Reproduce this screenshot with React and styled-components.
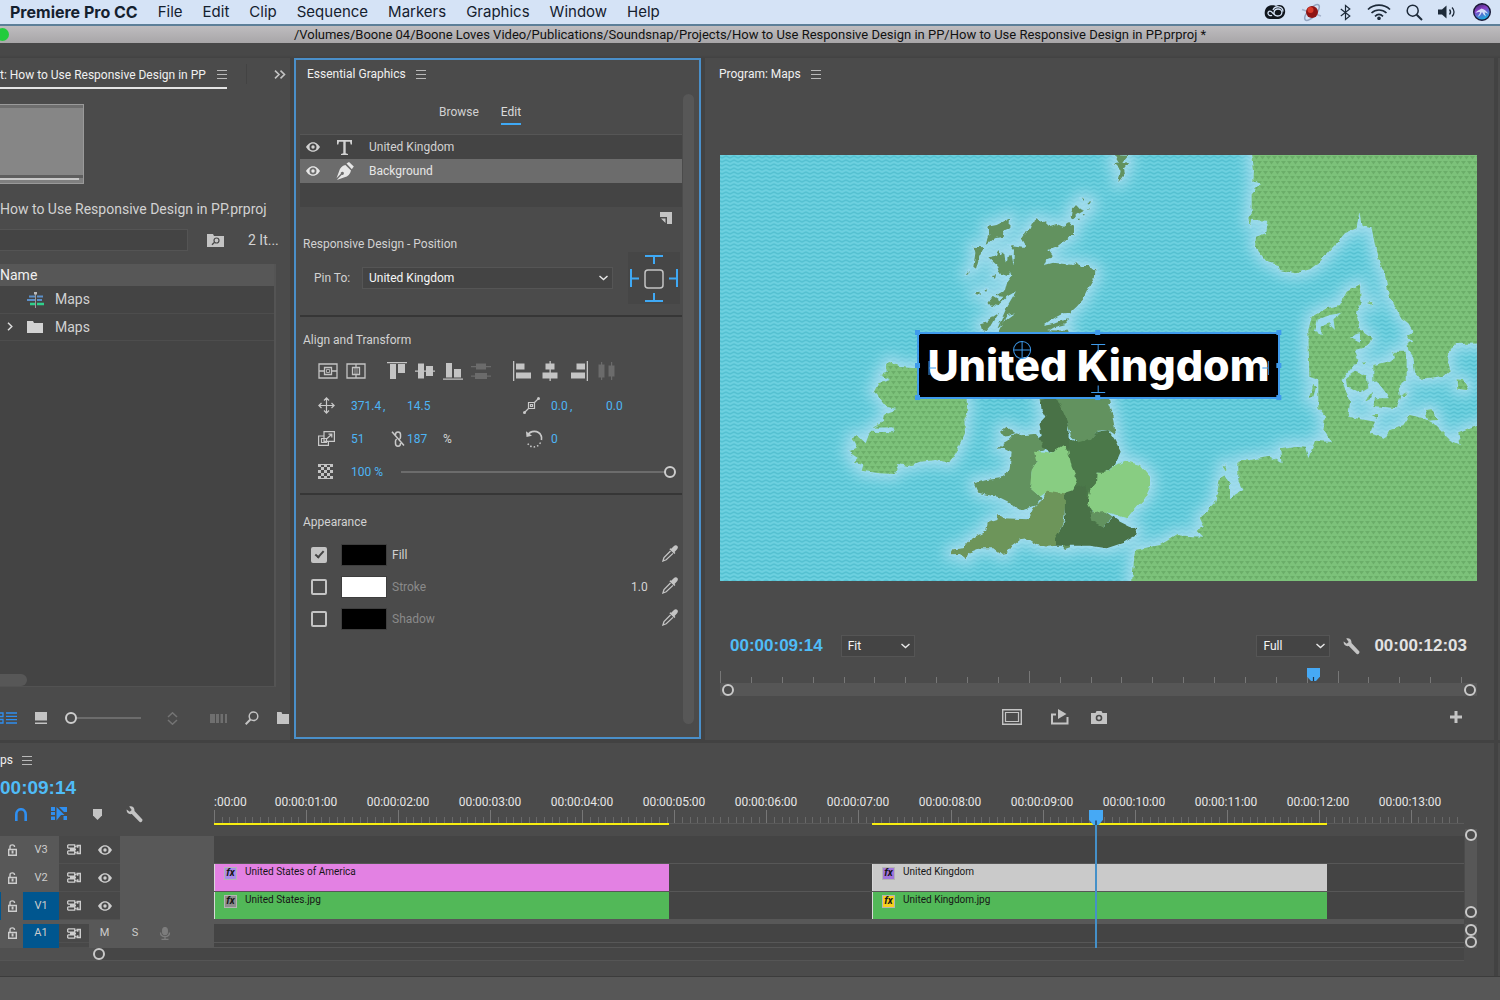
import React from "react";
import styled, { createGlobalStyle, css } from "styled-components";

const ui = '"Roboto", "Open Sans", sans-serif';
const mac = '"Inter", "Roboto", sans-serif';
const code = '"Liberation Sans", "Roboto", sans-serif';

const c = {
  panel: "#4b4b4b",
  gutter: "#424242",
  well: "#444444",
  line: "#585858",
  raised: "#575757",
  text: "#d2d2d2",
  bright: "#f0f0f0",
  dim: "#8a8a8a",
  icon: "#c4c4c4",
  blue: "#4db5f5",
  strong: "#2f8ff0",
};

const GlobalStyle = createGlobalStyle`
  *, *::before, *::after { box-sizing: border-box; }
  body { margin: 0; background: ${c.gutter}; overflow-x: hidden; }
  button, input, select { font: inherit; color: inherit; }
  svg { display: block; flex: none; }
`;

const Shell = styled.div`
  min-height: 100vh;
  display: flex;
  flex-direction: column;
  font: 12px/16px ${ui};
  color: ${c.text};
`;

const reset = css`
  padding: 0;
  border: 0;
  background: none;
`;

const Plain = styled.button`
  ${reset}
  display: inline-flex;
  align-items: center;
  justify-content: center;
  color: ${(p) => p.$tone || c.icon};
  flex: none;
`;

/* ---------- system bar ---------- */
const MenuBar = styled.header`
  height: 26px;
  display: flex;
  align-items: center;
  justify-content: space-between;
  padding: 0 9px 0 10px;
  background: #d5e3f6;
  border-bottom: 2px solid #5c7f99;
  font: 15px/24px ${mac};
  color: #14202e;
`;
const MenuItems = styled.nav`
  display: flex;
  gap: 20px;
`;
const MenuItem = styled.button`
  ${reset}
  font-weight: ${(p) => (p.$strong ? 700 : 400)};
  font-size: ${(p) => (p.$strong ? 16 : 15)}px;
`;
const StatusIcons = styled.div`
  display: flex;
  align-items: center;
  gap: 15px;
`;
const TitleBar = styled.div`
  height: 17px;
  display: flex;
  align-items: center;
  justify-content: center;
  position: relative;
  background: linear-gradient(#bebcbf, #a8a6a8);
  font: 13px/17px ${ui};
  color: #111;
  white-space: nowrap;
`;
const ZoomDot = styled.button`
  ${reset}
  position: absolute;
  left: -4px;
  top: 2px;
  width: 13px;
  height: 13px;
  border-radius: 50%;
  background: #22cc3c;
`;

/* ---------- panels ---------- */
const Upper = styled.main`
  flex: 1;
  display: grid;
  grid-template-columns: 290px 407px minmax(0, 1fr) 2px;
  column-gap: 4px;
  padding-top: 15px;
  background: linear-gradient(#484848 0 12px, ${c.gutter} 15px);
`;
const Panel = styled.section`
  background: ${c.panel};
  display: flex;
  flex-direction: column;
  min-width: 0;
`;
const PanelHead = styled.div`
  height: ${(p) => (p.$h || 32) + "px"};
  flex: none;
  display: flex;
  align-items: center;
  gap: 10px;
  padding-left: ${(p) => (p.$pad || 0) + "px"};
`;
const PanelTitle = styled.h2`
  margin: 0;
  font: 12px/16px ${ui};
  color: ${c.bright};
  white-space: nowrap;
`;

/* project */
const ProjectTab = styled.div`
  display: flex;
  align-items: center;
  justify-content: space-between;
  width: 227px;
  height: 30px;
  padding-top: 3px;
  border-bottom: 2px solid #e4e4e4;
`;
const TabRule = styled.span`
  width: 1px;
  height: 20px;
  margin-left: 9px;
  background: #434343;
`;
const Thumb = styled.div`
  width: 84px;
  height: 80px;
  margin-top: 14px;
  border: 1px solid #9a9a9a;
  border-left: 0;
  background: linear-gradient(#6e6e6e 0 3px, #868686 3px 70px, #5e5e5e 70px 73px, #808080 73px);
  display: flex;
  align-items: flex-end;
  padding: 0 4px 3px 0;
  &::after {
    content: "";
    flex: 1;
    height: 2px;
    background: #c8c8c8;
  }
`;
const ProjectName = styled.p`
  margin: 15px 0 0;
  font-size: 14px;
  line-height: 20px;
  white-space: nowrap;
`;
const SearchRow = styled.div`
  display: flex;
  align-items: center;
  margin-top: 10px;
  font-size: 14px;
  line-height: 20px;
`;
const SearchBox = styled.input`
  width: 188px;
  height: 22px;
  border: 1px solid #545454;
  border-left: 0;
  background: ${c.well};
  margin-right: 19px;
`;
const ItemCount = styled.span`
  margin-left: 24px;
`;
const Bin = styled.div`
  flex: 1;
  width: 276px;
  margin-top: 13px;
  background: ${c.well};
  border-right: 2px solid #545454;
  border-bottom: 1px solid #525252;
  display: flex;
  flex-direction: column;
  justify-content: space-between;
`;
const BinTable = styled.table`
  width: 100%;
  border-collapse: collapse;
  font-size: 14px;
  line-height: 20px;
  th {
    height: 22px;
    padding: 0;
    text-align: left;
    font-weight: 400;
    background: ${c.raised};
    color: ${c.bright};
  }
  td {
    height: 27px;
    padding: 0;
    border-bottom: 1px solid #4d4d4d;
  }
`;
const BinCell = styled.div`
  display: grid;
  grid-template-columns: 20px 17px 1fr;
  column-gap: 7px;
  align-items: center;
  svg:first-child { justify-self: center; }
  span { grid-column: 3; padding-left: 4px; }
`;
const BinScroll = styled.div`
  width: 27px;
  height: 12px;
  border-radius: 0 6px 6px 0;
  background: #575757;
`;
const ProjectFoot = styled.div`
  height: 53px;
  display: flex;
  align-items: center;
  padding-top: 9px;
`;
const Gap = styled.span`
  width: ${(p) => p.$w + "px"};
  flex: none;
`;

/* sliders */
const Range = styled.input`
  appearance: none;
  margin: 0;
  height: 12px;
  width: ${(p) => p.$w || "auto"};
  flex: ${(p) => (p.$grow ? 1 : "none")};
  min-width: 0;
  background: linear-gradient(#6c6c6c, #6c6c6c) center / calc(100% - 12px) 2px no-repeat;
  &::-webkit-slider-thumb {
    appearance: none;
    width: 12px;
    height: 12px;
    border-radius: 50%;
    border: 2px solid #cdcdcd;
    background: ${c.panel};
  }
`;

/* essential graphics */
const GraphicsPanel = styled(Panel)`
  border: 2px solid #4a8fc9;
  margin-bottom: 1px;
`;
const GraphicsBody = styled.div`
  flex: 1;
  display: flex;
  gap: 1px;
  padding: 0 5px 13px 4px;
`;
const GraphicsMain = styled.div`
  flex: 1;
  min-width: 0;
`;
const GraphicsScroll = styled.div`
  width: 11px;
  margin-top: 6px;
  border-radius: 6px;
  background: #575757;
`;
const Tabs = styled.div`
  display: flex;
  gap: 22px;
  padding: 12px 0 9px 139px;
`;
const Tab = styled.button`
  ${reset}
  height: 25px;
  border-bottom: 2px solid ${(p) => (p.$on ? "#3fa9f5" : "transparent")};
  color: ${(p) => (p.$on ? "#dcdcdc" : c.text)};
`;
const Layers = styled.ul`
  margin: 0;
  padding: 0 0 24px;
  list-style: none;
  background: ${c.well};
  border-top: 1px solid #565656;
`;
const Layer = styled.li`
  height: 24px;
  display: grid;
  grid-template-columns: 14px 19px 1fr;
  column-gap: 15px;
  align-items: center;
  padding-left: 6px;
  background: ${(p) => (p.$on ? "#6c6c6c" : "transparent")};
  color: ${(p) => (p.$on ? "#e6e6e6" : c.text)};
  svg { justify-self: center; }
`;
const NewLayerRow = styled.div`
  height: 22px;
  display: flex;
  justify-content: flex-end;
  align-items: center;
  padding-right: 10px;
`;
const SectionTitle = styled.h3`
  margin: ${(p) => p.$top + "px"} 0 0 3px;
  font: 12px/16px ${ui};
`;
const PinRow = styled.div`
  display: flex;
  align-items: center;
  padding: 0 2px 0 14px;
  height: 52px;
`;
const PinLabel = styled.label`
  width: 48px;
`;
const SelectWrap = styled.div`
  position: relative;
  flex: ${(p) => (p.$w ? "none" : 1)};
  width: ${(p) => (p.$w ? p.$w + "px" : "auto")};
  svg {
    position: absolute;
    right: 5px;
    top: 8px;
    pointer-events: none;
  }
`;
const Select = styled.select`
  appearance: none;
  display: block;
  width: 100%;
  height: 22px;
  padding: 0 20px 0 6px;
  border: 1px solid #555;
  background: ${c.well};
  color: #f6f6f6;
  font-size: 12px;
  line-height: 16px;
`;
const PinPad = styled.div`
  width: 52px;
  height: 52px;
  margin-left: 15px;
  background: #464646;
`;
const Divider = styled.hr`
  margin: ${(p) => p.$top + "px"} 0 0;
  border: 0;
  height: 2px;
  background: #363636;
`;
const AlignRow = styled.div`
  display: flex;
  gap: 21px;
  height: 20px;
  margin: 13px 0 8px;
  padding-left: 18px;
`;
const AlignGroup = styled.div`
  display: flex;
  gap: 8px;
`;
const TransformRow = styled.div`
  height: 33px;
  display: grid;
  grid-template-columns: 33px 56px 116px 28px 55px 1fr;
  align-items: center;
  padding-left: 18px;
`;
const Cell = styled.div`
  display: flex;
  align-items: center;
  color: ${(p) => p.$tone || c.blue};
  grid-column: ${(p) => p.$col || "auto"};
`;
const HotValue = styled.input`
  ${reset}
  width: ${(p) => p.$w + "px"};
  color: ${(p) => p.$tone || c.blue};
`;
const Unit = styled.span`
  color: ${(p) => p.$tone || "inherit"};
`;
const AppearanceList = styled.div`
  margin-top: 9px;
`;
const AppearanceRow = styled.div`
  height: 32px;
  display: flex;
  align-items: center;
  padding: 0 4px 0 11px;
`;
const Check = styled.input`
  appearance: none;
  margin: 0 14px 0 0;
  width: 16px;
  height: 16px;
  border: 2px solid #c4c4c4;
  border-radius: 2px;
  display: grid;
  place-items: center;
  &:checked { background: #c4c4c4; }
  &:checked::after {
    content: "";
    width: 5px;
    height: 9px;
    margin-bottom: 3px;
    border: solid #444;
    border-width: 0 2px 2px 0;
    transform: rotate(42deg);
  }
`;
const Swatch = styled.button`
  width: 46px;
  height: 22px;
  padding: 0;
  border: 1px solid #3e3e3e;
  background: ${(p) => p.$color};
`;
const AppearanceLabel = styled.label`
  flex: 1;
  padding-left: 5px;
  color: ${(p) => (p.$on ? c.text : c.dim)};
`;
const PickButton = styled(Plain)`
  padding-bottom: 4px;
`;

/* program monitor */
const Stage = styled.div`
  flex: 1;
  padding: 65px 17px 0 15px;
`;
const Frame = styled.div`
  position: relative;
  > svg { width: 100%; height: auto; }
`;
const TitleGraphic = styled.div`
  position: absolute;
  left: 26%;
  top: 41.5%;
  width: 48%;
  aspect-ratio: 363 / 67;
  display: grid;
  place-items: center;
  background: #000;
  border: 2px solid #3f9bec;
  color: #fff;
  font: 800 43px/60px ${mac};
  white-space: nowrap;
  svg {
    position: absolute;
    inset: -2px;
    width: calc(100% + 4px);
    height: calc(100% + 4px);
    overflow: visible;
  }
`;
const MonitorBar = styled.div`
  height: 24px;
  display: flex;
  align-items: center;
  padding: 0 27px 0 25px;
`;
const Timecode = styled.span`
  display: block;
  font: 700 ${(p) => p.$size || 17}px/22px ${code};
  color: ${(p) => p.$tone || "#4fbcf7"};
`;
const Grow = styled.span`
  flex: 1;
`;
const Scrub = styled.div`
  position: relative;
  margin: 9px 17px 0 15px;
`;
const ScrubTicks = styled.div`
  height: 16px;
  display: flex;
  align-items: flex-end;
  padding-right: 15px;
`;
const ScrubTick = styled.span`
  flex: ${(p) => (p.$last ? "none" : 1)};
  height: ${(p) => (p.$major ? 12 : 6)}px;
  border-left: 1px solid #777;
`;
const ScrubBar = styled.div`
  height: 13px;
  display: flex;
  align-items: center;
  justify-content: space-between;
  padding: 0 1px 0 2px;
  background: #565656;
`;
const Knob = styled.button`
  width: 12px;
  height: 12px;
  padding: 0;
  border: 2px solid #c9c9c9;
  border-radius: 50%;
  background: #4b4b4b;
  flex: none;
`;
const ScrubMarker = styled.div`
  position: absolute;
  left: 77.5%;
  top: 1px;
`;
const Transport = styled.div`
  height: 24px;
  margin: 9px 32px 11px 297px;
  display: flex;
  align-items: center;
`;

/* timeline */
const Timeline = styled.section`
  display: grid;
  grid-template-columns: minmax(0, 1fr) 2px;
  column-gap: 4px;
  margin-top: 3px;
`;
const TimelineBody = styled.div`
  background: ${c.panel};
  padding-bottom: 15px;
`;
const TimelineTop = styled.div`
  display: grid;
  grid-template-columns: 214px minmax(0, 1fr) 30px;
`;
const Tools = styled.div`
  grid-row: 1;
`;
const SequenceName = styled.div`
  display: flex;
  align-items: center;
  gap: 9px;
  height: 34px;
  color: ${c.bright};
`;
const ToolRow = styled.div`
  display: flex;
  align-items: center;
  height: 22px;
  margin-top: 4px;
  padding-left: 14px;
`;
const Ruler = styled.div`
  padding-top: 51px;
`;
const RulerLabels = styled.div`
  display: grid;
  grid-template-columns: 46fr repeat(13, 92fr) 8fr;
  font: 12px/16px ${ui};
  color: #e6e6e6;
  text-align: center;
  white-space: nowrap;
  span:first-child { text-align: left; }
`;
const RulerTicks = styled.div`
  height: 13px;
  display: flex;
  align-items: flex-end;
`;
const RulerTick = styled.span`
  flex: 1;
  height: ${(p) => (p.$major ? 13 : 6)}px;
  border-left: 1px solid ${(p) => (p.$major ? "#777" : "#686868")};
`;
const ClipGrid = styled.div`
  display: grid;
  grid-template-columns: 455fr 203fr 455fr 137fr;
`;
const RenderBar = styled(ClipGrid)`
  height: 13px;
  align-items: start;
  background: linear-gradient(#5a5a5a 0 1px, transparent 1px);
  i { height: 3px; background: #f8ee10; border-bottom: 1px solid #4b4b3c; }
  i:nth-child(2) { grid-column: 3; }
`;
const Tracks = styled.div`
  display: grid;
  grid-template-columns: 214px minmax(0, 1fr) 30px;
`;
const TrackHeads = styled.div`
  background: #585858;
`;
const TrackHead = styled.div`
  height: ${(p) => p.$h || 28}px;
  display: grid;
  grid-template-columns: 22px 36px 30px 31px 30px 30px;
  align-items: stretch;
  overflow: hidden;
  border-left: ${(p) => (p.$source ? "1px solid #00568f" : "1px solid #585858")};
`;
const HeadCell = styled.button`
  ${reset}
  display: grid;
  place-items: center;
  color: #cdcdcd;
  font-size: 11px;
  background: ${(p) => (p.$fill === "target" ? "#00568f" : p.$fill === "dark" ? "#484848" : "transparent")};
  border-bottom: 1px solid ${(p) => (p.$fill === "dark" ? "#505050" : "transparent")};
`;
const HeadBand = styled.div`
  height: 4px;
`;
const Lanes = styled.div`
  position: relative;
  background: ${c.well};
`;
const Lane = styled(ClipGrid)`
  height: ${(p) => p.$h || 28}px;
  border-bottom: 1px solid #575757;
`;
const Band = styled.div`
  height: 4px;
  background: #585858;
`;
const Clip = styled.div`
  grid-column: ${(p) => p.$col};
  display: flex;
  align-items: flex-start;
  gap: 8px;
  padding: 1px 0 0 9px;
  background: ${(p) => p.$color};
  border-left: 1px solid #d8d8d8;
  color: #161616;
  font: 10px/14px ${ui};
`;
const Fx = styled.span`
  width: 13px;
  height: 13px;
  margin-top: 2px;
  border: 1px solid #b4b4b4;
  background: ${(p) => p.$color};
  font: italic 700 10px/10px ${ui};
  text-align: center;
`;
const Playhead = styled.div`
  position: absolute;
  left: 70%;
  top: -26px;
  bottom: 0;
  display: flex;
  flex-direction: column;
  align-items: center;
  &::after {
    content: "";
    flex: 1;
    width: 2px;
    background: #4590c8;
  }
`;
const HeightBars = styled.div`
  display: flex;
  flex-direction: column;
  justify-content: space-between;
  margin-top: -7px;
  padding-left: 1px;
`;
const HeightBar = styled.div`
  width: 12px;
  height: ${(p) => p.$h}px;
  display: flex;
  flex-direction: column;
  justify-content: space-between;
  background: #575757;
`;
const ZoomBar = styled.div`
  height: 13px;
  display: flex;
  align-items: center;
  margin-right: 30px;
  padding-left: 93px;
  background: linear-gradient(90deg, #505050 100px, #464646 100px);
  border-bottom: 1px solid #555;
`;
const StatusBar = styled.footer`
  height: 24px;
  background: #575757;
  border-top: 1px solid #3c3c3c;
`;

/* ---------- icons ---------- */
const Burger = () => (
  <svg width="10" height="9" viewBox="0 0 10 9" stroke="#b9b9b9" strokeWidth="1">
    <path d="M0 .5h10M0 4.500h10M0 8.500h10" />
  </svg>
);
const Chevron = () => (
  <svg width="9" height="6" viewBox="0 0 9 6" fill="none" stroke="#e8e8e8" strokeWidth="1.400">
    <path d="M.5 1 4.500 4.600 8.500 1" />
  </svg>
);
const Eye = () => (
  <svg width="14" height="10" viewBox="0 0 14 10">
    <path fill="currentColor" fillRule="evenodd" d="M7 .2C10.500.2 12.800 3 14 5 12.800 7 10.500 9.800 7 9.800S1.200 7 0 5C1.200 3 3.500.2 7 .2ZM7 1.600a3.500 3.500 0 1 0 0 7 3.500 3.500 0 0 0 0-7Z" />
    <circle cx="7" cy="5" r="1.700" fill="currentColor" />
  </svg>
);
const TypeIcon = () => (
  <svg width="17" height="17" viewBox="0 0 17 17" fill="currentColor">
    <path d="M1 1h15v4.500h-1.300L14 2.700H9.700v11.600l2.300.6V16H5v-1.100l2.300-.6V2.700H3l-.7 2.800H1Z" />
  </svg>
);
const Pen = () => (
  <svg width="18" height="18" viewBox="0 0 18 18" fill="currentColor">
    <path d="M10.500 1.500 13 0l4.800 4.600-2 2.700Z" />
    <path d="m9.400 3 5.600 5.400c-.8 3.600-3 6-6.500 6.900L1.500 17.700l-.3-.3 4.600-4.600a1.600 1.600 0 1 0-1-1L.5 16.300 3 9.400C4 6 6 3.700 9.400 3Z" />
  </svg>
);
const Wrench = () => (
  <svg width="17" height="17" viewBox="0 0 17 17" fill="currentColor">
    <path d="M3.200.6C6-.4 8.800 1.500 8.500 5l7.700 8.300c.9 1-.6 3.700-2.500 2.600L5.800 8C2.500 8.700.2 6.400.7 3.500l3 2.300 2-1.800Z" />
  </svg>
);
const Dropper = () => (
  <svg width="16" height="17" viewBox="0 0 16 17">
    <path fill="currentColor" d="M9.200 3.700 12 1c1-1 2.700-.9 3.400 0 .8.9.6 2.300-.3 3.200l-2.500 2.700.8 1-1 1-5-4.700 1-1Z" />
    <path fill="none" stroke="currentColor" strokeWidth="1.300" d="M8.500 6 2 12.600.9 16l3.300-1.200L11 8.400" />
  </svg>
);
const Folder = ({ w = 16 }) => (
  <svg width={w} height="12" viewBox="0 0 16 12" preserveAspectRatio="none" fill="currentColor">
    <path d="M0 0h6l1 2h9v10H0Z" />
  </svg>
);
const FindFolder = () => (
  <svg width="17" height="13" viewBox="0 0 17 13">
    <path fill="#c4c4c4" d="M0 0h6l1 2h10v11H0Z" />
    <circle cx="9.500" cy="6.500" r="2.500" fill="none" stroke="#484848" strokeWidth="1.200" />
    <path d="m7.600 8.300-2.600 2.500" stroke="#484848" strokeWidth="1.400" />
  </svg>
);
const SequenceIcon = () => (
  <svg width="17" height="17" viewBox="0 0 17 17">
    <path d="M2 5.500h6M10 5.500h6M0 9h8M10 9h5" stroke="#5c8fc8" strokeWidth="2" />
    <path d="M3 13h5M10 13h7" stroke="#2fd08c" strokeWidth="2.500" />
    <path d="M8.500 1v16" stroke="#9a9a9a" strokeWidth="1" />
    <path d="M7 1h3v2.500H7Z" fill="#bbb" />
  </svg>
);
const Loupe = () => (
  <svg width="14" height="14" viewBox="0 0 14 14" fill="none" stroke="currentColor">
    <circle cx="8.500" cy="5.300" r="4.300" strokeWidth="1.500" />
    <path d="m5.400 8.500-4.700 4.800" strokeWidth="2" />
  </svg>
);
const Marker = ({ w = 13, h = 13 }) => (
  <svg width={w} height={h} viewBox="0 0 13 13" preserveAspectRatio="none">
    <path fill="#46a9f5" d="M0 0h13v8.500L9 13H4L0 8.500Z" />
    <path d="M6.500 9v4" stroke="#1e3347" strokeWidth="1.200" />
  </svg>
);
const Lock = () => (
  <svg width="9" height="12" viewBox="0 0 9 12">
    <path fill="none" stroke="#cdcdcd" strokeWidth="1.400" d="M2 5V2.700C2 .2 6.500.2 6.500 2.700V3" />
    <path fill="#cdcdcd" fillRule="evenodd" d="M0 4.800h9V12H0ZM1.400 6.200v4.400h6.200V6.200Z" />
    <path fill="#cdcdcd" d="M3.600 6.500h1.900v3H3.600Z" />
  </svg>
);
const SyncLock = () => (
  <svg width="14" height="11" viewBox="0 0 14 11" fill="none" stroke="#cdcdcd" strokeWidth="1.300">
    <path d="M1.300.800h6.400v3.400H1.300L.7 3.500v-2ZM1.300 6.800h6.400v3.400H1.300L.7 9.500v-2ZM7.700 2.500h2M7.700 8.500h2M3 5.500h6" />
    <path d="M9.500 1.500h3.800v8H9.500M10.700 1v2.800M10.700 7.200V10" strokeWidth="1.500" />
  </svg>
);
const Mic = () => (
  <svg width="12" height="13" viewBox="0 0 12 13" fill="none" stroke="#7d7d7d" strokeWidth="1.300">
    <rect x="3.700" y=".6" width="4.600" height="7" rx="2.300" fill="#7d7d7d" />
    <path d="M1.500 5.500c0 5.500 9 5.500 9 0M6 9.800V12M2.500 12.300h7" />
  </svg>
);

const alignIcons = [
  [
    ["Center vertically", <g key="a" fill="none" stroke="currentColor" strokeWidth="1.300"><path d="M1 3h18v14H1ZM6.500 6.500h7v7h-7ZM1 10h5.500M13.500 10H19" /><path d="M8.500 8.500h3v3h-3Z" strokeWidth=".8" /></g>],
    ["Center horizontally", <g key="b" fill="none" stroke="currentColor" strokeWidth="1.300"><path d="M1 3h18v14H1ZM6.500 6.500h7v7h-7ZM10 3v3.500M10 13.500V17" /><path d="M9 6.500h2v7H9Z" strokeWidth=".7" /></g>],
  ],
  [
    ["Align top", <g key="c" fill="currentColor"><path d="M0 1h20v1.300H0ZM3 3h6v15H3ZM11 3h7v9h-7Z" /></g>],
    ["Align middle", <g key="d" fill="currentColor"><path d="M0 9.500h20v1.300H0ZM3 2.500h6v15H3ZM11 5h7v10h-7Z" /></g>],
    ["Align bottom", <g key="e" fill="currentColor"><path d="M0 17.500h20v1.300H0ZM3 2h6v14.500H3ZM11 8h7v8.500h-7Z" /></g>],
    ["Distribute vertically", <g key="f" fill="#6b6b6b"><path d="M0 5h20v1.200H0ZM5 2.500h10v6H5ZM0 14.500h20v1.200H0ZM4 12h12v6H4Z" /></g>],
  ],
  [
    ["Align left", <g key="g" fill="currentColor"><path d="M1 0h1.300v20H1ZM4 2.500h8.500v6H4ZM4 11.500h15v6H4Z" /></g>],
    ["Align center", <g key="h" fill="currentColor"><path d="M9.500 0h1.300v20H9.500ZM5.500 2.500h9v6h-9ZM2.500 11.500h15v6h-15Z" /></g>],
    ["Align right", <g key="i" fill="currentColor"><path d="M18.700 0H20v20h-1.300ZM8.500 2.500H17v6H8.500ZM3 11.500h14v6H3Z" /></g>],
    ["Distribute horizontally", <g key="j" fill="#6b6b6b"><path d="M5 1h1.200v18H5ZM2.500 3.500h6v13h-6ZM15 1h1.200v18H15ZM12.500 4.500h6v11h-6Z" /></g>],
  ],
];

/* ---------- the map artwork ---------- */
const scotland =
  "M950 208 962 218 975 214 990 228 1010 222 1030 230 1045 220 1062 228 1062 255 1045 262 1030 275 1010 290 985 300 998 318 980 325 972 346 1000 338 1060 345 1072 340 1080 348 1110 348 1126 362 1125 382 1112 402 1100 425 1088 450 1070 470 1050 488 1030 490 1010 500 990 512 968 528 1000 522 1025 512 1048 508 1035 523 1000 532 985 541 1045 542 1060 600 1160 700 1170 760 960 760 950 640 870 600 835 545 850 515 885 490 862 495 842 528 832 536 846 505 862 468 888 424 860 440 830 470 850 440 825 438 855 420 860 400 877 378 865 360 850 350 866 320 880 345 882 300 870 285 905 290 920 290 905 265 918 245 930 235 935 218Z";
const isles =
  "M870 205 868 235 850 242 848 260 825 265 800 285 808 255 802 230 830 225ZM760 290 792 292 778 320 768 356 760 350 766 310ZM835 300 845 322 852 305 858 345 870 372 862 378 838 370 830 345 805 322 826 318ZM740 372 748 362 748 370ZM765 430 780 428 775 438ZM790 422 802 418 798 427ZM803 462 818 440 842 455 835 468ZM780 520 806 513 810 528 798 542 785 540ZM800 512 838 488 830 500 812 532ZM815 378 828 376 826 388ZM862 322 872 318 876 340 864 345ZM1055 180 1068 165 1080 178 1092 182 1072 194 1060 208 1052 200ZM1083 147 1090 146 1090 154ZM1102 156 1114 154 1108 163ZM1104 174 1110 176 1106 180ZM1072 206 1080 206 1076 214ZM1088 192 1094 192 1092 197ZM1185 15 1225 17 1210 35 1225 38 1212 55 1215 70 1195 97 1202 62 1182 42 1200 40ZM840 845 860 830 885 848 870 858 850 860ZM1022 1184 1050 1182 1050 1195 1035 1200Z";
const regions = [
  ["#4b7849", "M1030 860 1075 876 1110 866 1130 845 1165 840 1185 870 1202 905 1185 945 1155 970 1130 968 1135 1010 1110 1100 1030 1060Z"],
  ["#487247", "M962 750 1000 742 1040 760 1048 895 1020 895 990 908 970 895 955 868 965 860 958 820 976 800 965 780Z"],
  ["#62925e", "M1010 742 1160 750 1177 795 1188 856 1165 840 1132 842 1110 870 1075 880 1052 855 1040 810Z"],
  ["#487247", "M1030 1030 1060 1015 1100 1005 1105 1070 1120 1110 1150 1130 1180 1100 1200 1115 1230 1130 1253 1138 1245 1158 1210 1178 1160 1195 1110 1187 1008 1187 1000 1160 1020 1140 1035 1110Z"],
  ["#62925e", "M1110 1085 1150 1080 1178 1100 1150 1130 1118 1115Z"],
  ["#88cd82", "M1130 968 1155 968 1190 945 1215 932 1260 945 1290 980 1290 1012 1275 1045 1250 1070 1220 1105 1180 1092 1155 1085 1120 1090 1103 1060 1110 1020 1128 1000Z"],
  ["#62925e", "M862 875 885 850 905 856 945 852 965 880 975 900 955 905 950 935 935 965 932 1015 965 1045 950 1065 910 1080 890 1078 865 1055 835 1040 800 1034 775 1028 762 1000 800 990 840 985 868 962 875 905 852 893 832 897 850 882Z"],
  ["#6d955a", "M980 1020 1034 1020 1035 1065 1032 1110 1020 1140 1005 1165 1010 1187 985 1190 950 1185 920 1165 900 1168 870 1190 860 1212 845 1215 820 1195 780 1195 745 1208 740 1228 720 1212 692 1213 700 1198 730 1195 755 1165 795 1145 800 1120 832 1110 835 1095 850 1105 925 1108 940 1075 968 1048Z"],
  ["#88cd82", "M942 905 990 910 1030 885 1045 905 1055 950 1073 990 1060 1020 1030 1030 985 1022 960 1040 930 1015 935 960 950 935Z"],
];
const ireland =
  "M515 635 535 650 585 655 640 640 700 680 740 745 742 790 733 805 735 850 710 905 688 940 650 930 600 935 565 948 535 942 525 972 480 970 425 962 430 945 402 938 415 925 385 905 410 893 405 876 395 865 415 858 437 880 450 845 525 847 520 832 458 833 490 815 495 790 530 777 500 770 480 745 462 725 475 700 510 690 480 675 500 668 498 645Z";
const norway =
  "M1595 0H2290V580L2205 582 2180 620 2190 660 2170 678 2100 687 2085 670 2080 620 2065 600 2062 578 2078 575 2060 560 2080 545 2065 520 2045 505 2028 475 2005 430 1995 372 1980 342 1968 300 1955 235 1925 228 1918 185 1910 235 1875 250 1840 290 1800 335 1770 358 1725 370 1680 360 1675 345 1640 335 1605 290 1608 260 1638 250 1645 212 1597 210 1592 226 1585 205 1595 195 1595 130 1625 100 1600 95 1602 60Z";
const continent =
  "M1235 1310 1245 1200 1320 1185 1370 1155 1400 1158 1450 1160 1430 1140 1452 1130 1440 1105 1485 1060 1500 985 1515 975 1530 1000 1530 1045 1570 1020 1555 990 1555 935 1650 920 1685 940 1680 895 1730 888 1755 890 1765 925 1785 872 1835 876 1810 840 1815 800 1795 775 1795 690 1768 680 1765 540 1775 500 1820 475 1860 465 1880 425 1920 403 1922 460 1908 490 1920 540 1955 565 1940 590 1905 600 1915 630 1865 690 1890 755 1885 800 1965 815 1950 850 1995 865 2010 840 2050 825 2070 795 2110 805 2140 820 2190 870 2222 885 2215 850 2290 820V1310Z";
const danishIsles =
  "M1880 682 1905 665 1940 677 1945 715 1920 730 1885 710ZM1960 645 2000 635 2025 625 2020 605 2060 605 2060 690 2035 710 2040 740 2030 775 1960 768 1965 745 2010 745 1980 705 1960 690ZM2210 688 2225 690 2245 705 2238 720 2212 716ZM2115 780 2135 778 2152 810 2125 812ZM1766 745 1780 705 1788 712 1780 740ZM1945 458 1957 456 1955 466ZM1508 950 1520 942 1518 965ZM1935 755 1955 725 1955 745ZM1955 795 1975 795 1970 803ZM1925 635 1935 634 1932 644ZM2040 738 2060 728 2055 738Z";
const fjords =
  "M1782 545 1790 510 1830 495 1866 488 1840 505 1845 540 1825 520 1805 530 1805 555ZM1890 560 1920 550 1920 575Z";

const MapArt = () => (
  <svg viewBox="0 0 757 426" role="img" aria-label="Map of the United Kingdom">
    <defs>
      <pattern id="waves" width="8" height="4" patternUnits="userSpaceOnUse">
        <rect width="8" height="4" fill="#62ccdc" />
        <path d="M-2 1 2 3 6 1 10 3" fill="none" stroke="#52bdce" strokeWidth="1" />
      </pattern>
      <pattern id="wavesLight" width="8" height="4" patternUnits="userSpaceOnUse">
        <path d="M-2 -1 2 1 6 -1 10 1M-2 3 2 5 6 3 10 5" fill="none" stroke="#a6e4ee" strokeWidth="1" opacity=".22" />
      </pattern>
      <pattern id="dots" width="6" height="10" patternUnits="userSpaceOnUse">
        <rect width="6" height="10" fill="#7cc27a" />
        <path d="M0 1h5L2.500 4.500ZM3 6h5L5.500 9.500ZM-3 6h5L-.5 9.500Z" fill="#6bae69" />
      </pattern>
      <filter id="rough" x="-5%" y="-5%" width="110%" height="110%">
        <feTurbulence type="fractalNoise" baseFrequency=".2" numOctaves="1" seed="4" />
        <feDisplacementMap in="SourceGraphic" scale="5" xChannelSelector="R" yChannelSelector="G" />
      </filter>
      <filter id="glow" x="-10%" y="-10%" width="120%" height="120%">
        <feGaussianBlur stdDeviation="6" />
      </filter>
      <g id="land" transform="translate(0 -5) scale(.33333)">
        <path d={scotland} />
        <path d={isles} />
        {regions.map(([, d]) => <path key={d} d={d} />)}
        <path d={ireland} />
        <path d={norway} />
        <path d={continent} />
        <path d={danishIsles} />
      </g>
      <mask id="textured">
        <g filter="url(#rough)">
          <g transform="translate(0 -5) scale(.33333)">
            <path fill="#fff" d={ireland + norway + continent + danishIsles} />
            <path fill="#000" d={fjords} />
          </g>
        </g>
      </mask>
      <clipPath id="frame"><rect width="757" height="426" /></clipPath>
    </defs>
    <g clipPath="url(#frame)">
      <rect width="757" height="426" fill="url(#waves)" />
      <use href="#land" fill="#b4e0f2" stroke="#b4e0f2" strokeWidth="72" strokeLinejoin="round" opacity=".2" filter="url(#glow)" />
      <use href="#land" fill="#b4e0f2" stroke="#b4e0f2" strokeWidth="24" strokeLinejoin="round" opacity=".75" filter="url(#glow)" />
      <rect width="757" height="426" fill="url(#wavesLight)" />
      <use href="#land" fill="#9bdaee" stroke="#9bdaee" strokeWidth="6" filter="url(#rough)" />
      <rect width="757" height="426" fill="url(#dots)" mask="url(#textured)" />
      <g filter="url(#rough)">
        <g transform="translate(0 -5) scale(.33333)">
          <path fill="#62925e" d={scotland + isles} />
          {regions.map(([fill, d]) => <path key={d} fill={fill} d={d} />)}
        </g>
      </g>
    </g>
  </svg>
);

const TitleHandles = () => (
  <svg viewBox="0 0 363 67" preserveAspectRatio="none" fill="none" stroke="#3f9bec">
    <g fill="#3f9bec" stroke="none">
      {[[1, 1], [181, 1], [362, 1], [1, 34], [362, 34], [1, 66], [181, 66], [362, 66]].map(([x, y]) => (
        <rect key={x + "-" + y} x={x - 3} y={y - 3} width="5" height="5" />
      ))}
    </g>
    <circle cx="105" cy="18" r="8.500" />
    <path d="M105 9.500v17M96.500 18h17M174 12.500h14M181 12.500v7M174 60.500h14M181 60.500v-7M12 29v14M12 36h7M351 29v14M351 36h-6" />
  </svg>
);

const menus = ["File", "Edit", "Clip", "Sequence", "Markers", "Graphics", "Window", "Help"];
const seconds = ["01", "02", "03", "04", "05", "06", "07", "08", "09", "10", "11", "12", "13"];

const System = () => (
  <>
    <MenuBar>
      <MenuItems>
        <MenuItem $strong>Premiere Pro CC</MenuItem>
        {menus.map((m) => <MenuItem key={m}>{m}</MenuItem>)}
      </MenuItems>
      <StatusIcons>
        <svg width="22" height="16" viewBox="0 0 22 16" fill="none">
          <path d="M7 1.200C10 1 11 1.500 12 2 18-1 22 4 21 9c-1 4-4 6-8 6H6C2 15 .5 11.500.7 8.500 1 4 4 1.500 7 1.200Z" fill="#10161d" />
          <path d="M12.500 11.500C9 12 9 5 14 5c5.500 0 5 7-.5 7-3 0-4-2-5.500-3.700C5.500 6 3.800 7.800 4 9.500c.3 2 2.500 2.700 4 1.700M9 6c2-5 10-4 10 1.500" stroke="#d5e3f6" strokeWidth="1.300" />
        </svg>
        <svg width="22" height="19" viewBox="0 0 22 19" fill="none">
          <ellipse cx="11" cy="9.500" rx="10" ry="4" transform="rotate(-48 11 9.500)" stroke="#93a4c0" strokeWidth="1.500" />
          <path d="M1 6.500 20 13" stroke="#a6b4cc" strokeWidth="1.500" />
          <circle cx="11" cy="9" r="6" fill="#8e1414" />
          <circle cx="9.500" cy="7" r="3" fill="#d83a2a" />
        </svg>
        <svg width="14" height="17" viewBox="-2 0 14 16" fill="none" stroke="#1d2a39" strokeWidth="1.200">
          <path d="m.8 4.500 9 7L5.500 15V1l4.300 3.500-9 7" />
        </svg>
        <svg width="24" height="16" viewBox="0 0 24 16" fill="none" stroke="#1d2a39" strokeWidth="1.700">
          <path d="M1 5.500c6-5.800 16-5.800 22 0M4.500 9c4.300-4 10.700-4 15 0M8 12.300c2.400-2.200 5.600-2.200 8 0" />
          <circle cx="12" cy="14.300" r="1" fill="#1d2a39" />
        </svg>
        <svg width="17" height="17" viewBox="0 0 17 17" fill="none" stroke="#1d2a39" strokeWidth="1.500">
          <circle cx="6.700" cy="6.700" r="5.500" />
          <path d="m10.700 10.700 5.300 5.300" strokeWidth="2" />
        </svg>
        <svg width="20" height="14" viewBox="0 0 20 14" fill="none" stroke="#1d2a39" strokeWidth="1.300">
          <path d="M0 4.500h4L8.500.500v13L4 9.500H0Z" fill="#1d2a39" stroke="none" />
          <path d="M11.500 4.500c1.300 1.500 1.300 3.500 0 5M14 2.500c2.700 2.700 2.700 6.300 0 9" />
        </svg>
        <svg width="18" height="18" viewBox="0 0 18 18">
          <defs>
            <linearGradient id="siri" x1="0" y1="0" x2=".4" y2="1">
              <stop offset="0" stopColor="#2a2358" /><stop offset=".45" stopColor="#8a3fc8" /><stop offset="1" stopColor="#18a8dc" />
            </linearGradient>
          </defs>
          <circle cx="9" cy="9" r="8.300" fill="url(#siri)" stroke="#1a1836" strokeWidth="1.400" />
          <path d="M2.500 10C5 6.500 7 7 8.500 5.500 11 6 13.500 8 15.500 11c-2-1.500-3-1.500-4-1.500l1.500 4c-2-1-3-3-4-4.500-1 2-2 4-4.500 5C6 12 7 10.500 7 9c-2 0-3 0-4.500 1Z" fill="#e4f5ff" opacity=".85" />
        </svg>
      </StatusIcons>
    </MenuBar>
    <TitleBar>
      <ZoomDot aria-label="Zoom window" />
      /Volumes/Boone 04/Boone Loves Video/Publications/Soundsnap/Projects/How to Use Responsive Design in PP/How to Use Responsive Design in PP.prproj *
    </TitleBar>
  </>
);

const Project = () => (
  <Panel>
    <PanelHead>
      <ProjectTab>
        <PanelTitle>t: How to Use Responsive Design in PP</PanelTitle>
        <Burger />
      </ProjectTab>
      <TabRule />
      <Gap $w={7} />
      <Plain aria-label="More panels">
        <svg width="12" height="9" viewBox="0 0 12 9" fill="none" stroke="currentColor" strokeWidth="1.600">
          <path d="m1 .6 4 3.900-4 3.900M6.500.6l4 3.900-4 3.900" />
        </svg>
      </Plain>
    </PanelHead>
    <Thumb />
    <ProjectName>How to Use Responsive Design in PP.prproj</ProjectName>
    <SearchRow>
      <SearchBox aria-label="Search project" />
      <Plain aria-label="Find in bin"><FindFolder /></Plain>
      <ItemCount>2 It...</ItemCount>
    </SearchRow>
    <Bin>
      <BinTable>
        <thead><tr><th>Name</th></tr></thead>
        <tbody>
          <tr><td><BinCell><i /><SequenceIcon /><span>Maps</span></BinCell></td></tr>
          <tr><td>
            <BinCell>
              <svg width="6" height="9" viewBox="0 0 6 9" fill="none" stroke="#dcdcdc" strokeWidth="1.500"><path d="m1 .7 3.800 3.800L1 8.300" /></svg>
              <Folder /><span>Maps</span>
            </BinCell>
          </td></tr>
        </tbody>
      </BinTable>
      <BinScroll />
    </Bin>
    <ProjectFoot>
      <Plain aria-label="List view" $tone={c.strong}>
        <svg width="17" height="12" viewBox="0 0 17 12" fill="none" stroke="currentColor" strokeWidth="1.300">
          <path d="M-1 1h4v3.500h-4ZM-1 7.500h4V11h-4ZM6 1h11M6 4.400h11M6 7.700h11M6 11h11" />
        </svg>
      </Plain>
      <Gap $w={18} />
      <Plain aria-label="Icon view">
        <svg width="12" height="12" viewBox="0 0 12 12" fill="currentColor"><path d="M0 0h12v8.500H0ZM0 10.500h12V12H0Z" /></svg>
      </Plain>
      <Gap $w={18} />
      <Range type="range" aria-label="Thumbnail size" $w="82px" defaultValue="0" />
      <Gap $w={20} />
      <Plain aria-label="Sort icons" $tone="#747474">
        <svg width="11" height="13" viewBox="0 0 11 13" fill="none" stroke="currentColor" strokeWidth="1.500"><path d="M1 5 5.500.8 10 5M1 8l4.500 4.200L10 8" /></svg>
      </Plain>
      <Gap $w={32} />
      <Plain aria-label="Automate to sequence" $tone="#6f6f6f">
        <svg width="17" height="9" viewBox="0 0 17 9" fill="currentColor"><path d="M0 0h5v9H0ZM6 0h3v9H6ZM10.500 0h2.500v9h-2.500ZM15 0h2v9h-2Z" /></svg>
      </Plain>
      <Gap $w={18} />
      <Plain aria-label="Find"><Loupe /></Plain>
      <Gap $w={18} />
      <Plain aria-label="New bin"><Folder w={12} /></Plain>
    </ProjectFoot>
  </Panel>
);

const appearance = [
  { id: "fill", label: "Fill", color: "#000", on: true },
  { id: "stroke", label: "Stroke", color: "#fff", value: "1.0" },
  { id: "shadow", label: "Shadow", color: "#000" },
];

const Graphics = () => (
  <GraphicsPanel>
    <PanelHead $h={28} $pad={11}>
      <PanelTitle>Essential Graphics</PanelTitle>
      <Burger />
    </PanelHead>
    <GraphicsBody>
      <GraphicsMain>
        <Tabs><Tab>Browse</Tab><Tab $on>Edit</Tab></Tabs>
        <Layers>
          <Layer><Eye /><TypeIcon />United Kingdom</Layer>
          <Layer $on><Eye /><Pen />Background</Layer>
        </Layers>
        <NewLayerRow>
          <Plain aria-label="New layer">
            <svg width="12" height="12" viewBox="0 0 12 12" fill="currentColor"><path d="M0 0h12v12H7V5H0ZM1 6.500h4.500V11Z" /></svg>
          </Plain>
        </NewLayerRow>
        <SectionTitle $top={7}>Responsive Design - Position</SectionTitle>
        <PinRow>
          <PinLabel htmlFor="pin">Pin To:</PinLabel>
          <SelectWrap>
            <Select id="pin"><option>United Kingdom</option></Select>
            <Chevron />
          </SelectWrap>
          <PinPad>
            <svg width="52" height="52" viewBox="0 0 52 52" fill="none" stroke="#3fa9f5" strokeWidth="2">
              <path d="M17 4h18M26 5v7M17 49h18M26 48v-7M3 17v18M4 26.500h7M49 17v18M48 26.500h-7" />
              <rect x="17" y="18" width="18" height="18" rx="3" stroke="#c4c4c4" strokeWidth="1.500" />
            </svg>
          </PinPad>
        </PinRow>
        <Divider $top={11} />
        <SectionTitle $top={15}>Align and Transform</SectionTitle>
        <AlignRow>
          {alignIcons.map((group, i) => (
            <AlignGroup key={i}>
              {group.map(([name, art]) => (
                <Plain key={name} aria-label={name}><svg width="20" height="20" viewBox="0 0 20 20">{art}</svg></Plain>
              ))}
            </AlignGroup>
          ))}
        </AlignRow>
        <TransformRow>
          <svg width="17" height="17" viewBox="0 0 17 17" fill="none" stroke="#c9c9c9" strokeWidth="1.200">
            <path d="M8.500 1.500v14M1.500 8.500h14M6 3.500l2.500-2.600L11 3.500M6 13.500l2.500 2.600 2.500-2.600M3.500 6 .9 8.500 3.500 11M13.500 6l2.600 2.500-2.600 2.500" />
          </svg>
          <Cell><HotValue aria-label="Position X" $w={32} defaultValue="371.4" /><Unit>,</Unit></Cell>
          <Cell><HotValue aria-label="Position Y" $w={36} defaultValue="14.5" /></Cell>
          <svg width="17" height="17" viewBox="0 0 17 17" fill="none" stroke="#c9c9c9" strokeWidth="1.200">
            <path d="M2 15 6 11M11 6l4-4M5.500 5.500h6v6h-6Z" /><path d="M7.500 7.500h2v2h-2Z" />
            <circle cx="1.500" cy="15.500" r="1.500" fill="#c9c9c9" stroke="none" /><circle cx="15.500" cy="1.500" r="1.500" fill="#c9c9c9" stroke="none" />
          </svg>
          <Cell><HotValue aria-label="Anchor X" $w={19} defaultValue="0.0" /><Unit>,</Unit></Cell>
          <Cell><HotValue aria-label="Anchor Y" $w={36} defaultValue="0.0" /></Cell>
        </TransformRow>
        <TransformRow>
          <svg width="17" height="15" viewBox="0 0 17 15" fill="none" stroke="#c9c9c9" strokeWidth="1.200">
            <path d="M6 .6h10.400v9.800H6ZM6 5H.6v9.400h9.800v-4M3.500 7.500h5v4h-5ZM9 7.500l4.500-4M10.500 3.200h3.300v3.300" />
          </svg>
          <Cell>
            <HotValue aria-label="Scale height" $w={40} defaultValue="51" />
            <svg width="14" height="16" viewBox="0 0 14 16" fill="none" stroke="#c9c9c9" strokeWidth="1.500">
              <path d="M1 .8 13 14.500M4.500 4V3.500c0-3.500 5-3.500 5 0V6c0 1-.5 1.700-1 2M9.500 12v.5c0 3.500-5 3.500-5 0V10c0-1 .5-1.500 1.200-2" />
            </svg>
          </Cell>
          <Cell><HotValue aria-label="Scale width" $w={36} defaultValue="187" /><Unit $tone="#d5d5d5">%</Unit></Cell>
          <svg width="21" height="18" viewBox="-1 0 20 18" fill="none" stroke="#c9c9c9">
            <path d="M3 5.500C6 0 14 .2 16.500 5.500c.8 1.500.8 3 .4 4.500" strokeWidth="1.700" />
            <path d="M16 12.500c-3 6-11 6-13.500-.5" strokeWidth="1.500" strokeDasharray="1.500 2" />
            <path d="M1.500 1.200 2 7l5.500-1.200Z" fill="#c9c9c9" stroke="none" />
          </svg>
          <Cell><HotValue aria-label="Rotation" $w={36} defaultValue="0" /></Cell>
        </TransformRow>
        <TransformRow>
          <svg width="15" height="15" viewBox="0 0 15 15" fill="#c4c4c4">
            {[0, 1, 2, 3, 4].map((r) => [0, 1, 2, 3, 4].map((k) => (r + k) % 2 === 0 && <rect key={r + "" + k} x={k * 3} y={r * 3} width="3" height="3" />))}
            <path d="M3 0h3v1H3ZM9 0h3v1H9ZM3 14h3v1H3ZM9 14h3v1H9Z" />
          </svg>
          <Cell $col="2 / -1">
            <HotValue aria-label="Opacity" $w={44} defaultValue="100 %" />
            <Range type="range" aria-label="Opacity slider" $grow defaultValue="100" />
            <Gap $w={6} />
          </Cell>
        </TransformRow>
        <Divider $top={5} />
        <SectionTitle $top={19}>Appearance</SectionTitle>
        <AppearanceList>
          {appearance.map((a) => (
            <AppearanceRow key={a.id}>
              <Check id={a.id} type="checkbox" defaultChecked={a.on} />
              <Swatch aria-label={a.label + " color"} $color={a.color} />
              <AppearanceLabel htmlFor={a.id} $on={a.on}>{a.label}</AppearanceLabel>
              {a.value && <HotValue aria-label="Stroke width" $w={31} $tone="#d5d5d5" defaultValue={a.value} />}
              <PickButton aria-label={"Pick " + a.label}><Dropper /></PickButton>
            </AppearanceRow>
          ))}
        </AppearanceList>
      </GraphicsMain>
      <GraphicsScroll />
    </GraphicsBody>
  </GraphicsPanel>
);

const Program = () => (
  <Panel>
    <PanelHead $pad={14}><PanelTitle>Program: Maps</PanelTitle><Burger /></PanelHead>
    <Stage>
      <Frame>
        <MapArt />
        <TitleGraphic>United Kingdom<TitleHandles /></TitleGraphic>
      </Frame>
    </Stage>
    <MonitorBar>
      <Timecode>00:00:09:14</Timecode>
      <Gap $w={18} />
      <SelectWrap $w={74}><Select aria-label="Zoom level"><option>Fit</option></Select><Chevron /></SelectWrap>
      <Grow />
      <SelectWrap $w={74}><Select aria-label="Playback resolution"><option>Full</option></Select><Chevron /></SelectWrap>
      <Gap $w={13} />
      <Plain aria-label="Settings"><Wrench /></Plain>
      <Gap $w={14} />
      <Timecode $tone="#e2e2e2">00:00:12:03</Timecode>
    </MonitorBar>
    <Scrub>
      <ScrubTicks>
        {Array.from({ length: 25 }, (_, i) => <ScrubTick key={i} $major={i % 10 === 0} $last={i === 24} />)}
      </ScrubTicks>
      <ScrubBar><Knob aria-label="Zoom start" /><Knob aria-label="Zoom end" /></ScrubBar>
      <ScrubMarker><Marker /></ScrubMarker>
    </Scrub>
    <Transport>
      <Plain aria-label="Safe margins">
        <svg width="20" height="16" viewBox="0 0 20 16" fill="none" stroke="currentColor"><path d="M.700.700h18.600v14.600H.700Z" strokeWidth="1.400" /><path d="M3.500 3.500h13v9h-13Z" strokeWidth="1.200" /></svg>
      </Plain>
      <Gap $w={29} />
      <Plain aria-label="Export">
        <svg width="18" height="16" viewBox="0 0 18 16" fill="currentColor"><path d="M0 4.500h5v2H2v7h13.500V8h2v7.500H0ZM7 0l8.500 5L7 10Z" /></svg>
      </Plain>
      <Gap $w={22} />
      <Plain aria-label="Export frame">
        <svg width="16" height="13" viewBox="0 0 16 13" fill="currentColor" fillRule="evenodd"><path d="M0 2h4.500L5.500 0h5l1 2H16v11H0ZM8 3.700a3.300 3.300 0 1 0 0 6.600 3.300 3.300 0 0 0 0-6.600Zm0 1.600a1.700 1.700 0 1 1 0 3.400 1.700 1.700 0 0 1 0-3.400Z" /></svg>
      </Plain>
      <Grow />
      <Plain aria-label="Add button">
        <svg width="12" height="12" viewBox="0 0 12 12" fill="currentColor"><path d="M4.500 0h3v4.500H12v3H7.500V12h-3V7.500H0v-3h4.500Z" /></svg>
      </Plain>
    </Transport>
  </Panel>
);

const TimelinePanel = () => (
  <Timeline>
    <TimelineBody>
      <TimelineTop>
        <Tools>
          <SequenceName>ps<Burger /></SequenceName>
          <Timecode $size={19}>00:09:14</Timecode>
          <ToolRow>
            <Plain aria-label="Snap" $tone={c.strong}>
              <svg width="14" height="13" viewBox="0 0 14 13" fill="none" stroke="currentColor" strokeWidth="2.600"><path d="M2.300 13V6.500c0-7 9.400-7 9.400 0V13" /></svg>
            </Plain>
            <Gap $w={23} />
            <Plain aria-label="Linked selection" $tone={c.strong}>
              <svg width="16" height="14" viewBox="0 0 16 14" fill="currentColor"><path d="M0 0h4v4H0ZM0 5h4v3H0ZM0 9.500h4V13H0ZM5.500 0l8 8H10l-4.500 5.500ZM8 0h8v5h-3ZM12.500 9H16v4h-3.500Z" /></svg>
            </Plain>
            <Gap $w={26} />
            <Plain aria-label="Add marker">
              <svg width="9" height="11" viewBox="0 0 9 11" fill="currentColor"><path d="M0 0h9v6.500L4.500 11 0 6.500Z" /></svg>
            </Plain>
            <Gap $w={24} />
            <Plain aria-label="Display settings"><Wrench /></Plain>
          </ToolRow>
        </Tools>
        <Ruler>
          <RulerLabels>
            <span>:00:00</span>
            {seconds.map((s) => <span key={s}>{"00:00:" + s + ":00"}</span>)}
          </RulerLabels>
          <RulerTicks>
            {Array.from({ length: 163 }, (_, i) => <RulerTick key={i} $major={i % 12 === 0} />)}
          </RulerTicks>
          <RenderBar><i /><i /></RenderBar>
        </Ruler>
      </TimelineTop>
      <Tracks>
        <TrackHeads>
          {["V3", "V2", "V1"].map((t) => (
            <TrackHead key={t} $source={t === "V1"}>
              <HeadCell aria-label={"Lock " + t}><Lock /></HeadCell>
              <HeadCell $fill={t === "V1" ? "target" : ""}>{t}</HeadCell>
              <HeadCell aria-label={"Sync lock " + t} $fill="dark"><SyncLock /></HeadCell>
              <HeadCell aria-label={"Show " + t} $fill="dark"><Eye /></HeadCell>
            </TrackHead>
          ))}
          <HeadBand />
          <TrackHead $h={19}>
            <HeadCell aria-label="Lock A1"><Lock /></HeadCell>
            <HeadCell $fill="target">A1</HeadCell>
            <HeadCell aria-label="Sync lock A1" $fill="dark"><SyncLock /></HeadCell>
            <HeadCell>M</HeadCell>
            <HeadCell>S</HeadCell>
            <HeadCell aria-label="Record A1"><Mic /></HeadCell>
          </TrackHead>
          <TrackHead $h={5}>
            <span />
            <HeadCell as="span" $fill="target" />
            <HeadCell as="span" $fill="dark" />
          </TrackHead>
        </TrackHeads>
        <Lanes>
          <Lane />
          <Lane>
            <Clip $col={1} $color="#e381e3"><Fx $color="#a989ea">fx</Fx>United States of America</Clip>
            <Clip $col={3} $color="#cacaca"><Fx $color="#a175dc">fx</Fx>United Kingdom</Clip>
          </Lane>
          <Lane>
            <Clip $col={1} $color="#52b858"><Fx $color="#8d8d8d">fx</Fx>United States.jpg</Clip>
            <Clip $col={3} $color="#52b858"><Fx $color="#f8d01c">fx</Fx>United Kingdom.jpg</Clip>
          </Lane>
          <Band />
          <Lane $h={19} />
          <Lane $h={5} />
          <Playhead><Marker w={14} h={15} /></Playhead>
        </Lanes>
        <HeightBars>
          <HeightBar $h={89}><Knob aria-label="Video height top" /><Knob aria-label="Video height bottom" /></HeightBar>
          <HeightBar $h={24}><Knob aria-label="Audio height top" /><Knob aria-label="Audio height bottom" /></HeightBar>
        </HeightBars>
      </Tracks>
      <ZoomBar><Knob aria-label="Timeline zoom" /></ZoomBar>
    </TimelineBody>
    <Panel as="div" />
  </Timeline>
);

export default function App() {
  return (
    <Shell>
      <GlobalStyle />
      <System />
      <Upper>
        <Project />
        <Graphics />
        <Program />
        <Panel as="div" />
      </Upper>
      <TimelinePanel />
      <StatusBar />
    </Shell>
  );
}
